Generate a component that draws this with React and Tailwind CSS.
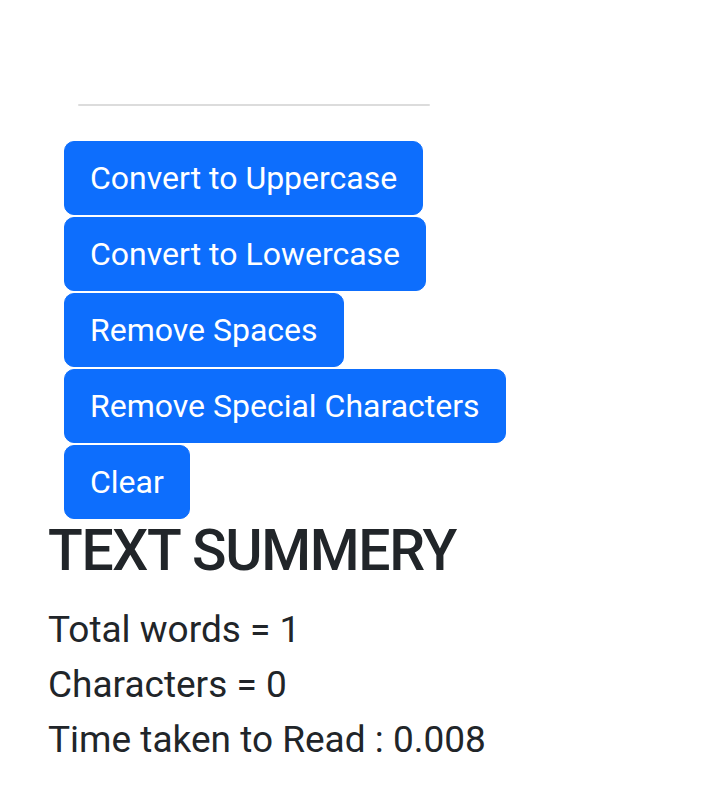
import React from "react";

const actions = [
  "Convert to Uppercase",
  "Convert to Lowercase",
  "Remove Spaces",
  "Remove Special Characters",
  "Clear",
];

export default function App() {
  return (
    <div className="min-h-screen bg-white font-['Roboto',sans-serif] text-[#212529]">
      <div className="relative h-[141px]">
        <div className="absolute left-[78px] top-[104px] h-[2px] w-[352px] rounded-full bg-[#dcdcdc]" />
      </div>

      <div className="flex flex-col items-start gap-[2px] pl-[64px]">
        {actions.map((label) => (
          <button
            key={label}
            className="rounded-[10px] border border-[#0d6efd] bg-[#0d6efd] px-[25px] py-[12px] text-[32px] leading-[48px] text-white"
          >
            {label}
          </button>
        ))}
      </div>

      <div className="pl-[48px]">
        <h1 className="text-[57px] font-medium leading-[64px] tracking-[-1.3px]">TEXT SUMMERY</h1>
        <div className="mt-[19px] text-[37px] leading-[55px]">
          <p>Total words = 1</p>
          <p>Characters = 0</p>
          <p>Time taken to Read : 0.008</p>
        </div>
      </div>
    </div>
  );
}
